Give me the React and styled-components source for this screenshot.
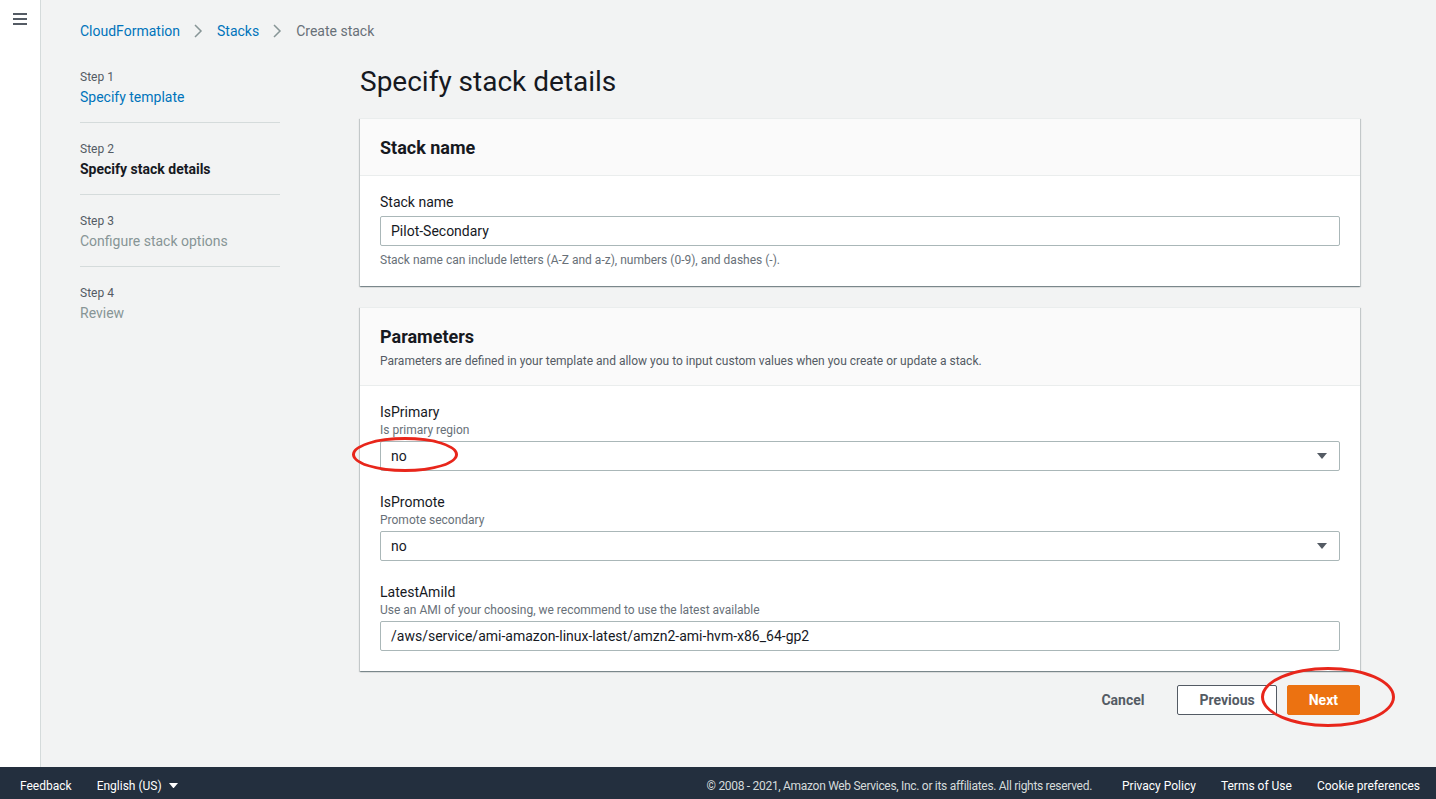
import React from 'react';
import styled, { createGlobalStyle } from 'styled-components';

const GlobalStyle = createGlobalStyle`
  html, body {
    margin: 0;
    padding: 0;
    height: 100%;
  }
  body {
    font-family: Roboto, "Helvetica Neue", Arial, sans-serif;
    color: #16191f;
    background: #f2f3f3;
  }
  * {
    box-sizing: border-box;
  }
`

const Page = styled.div`
  display: flex;
  flex-direction: column;
  height: 799px;
`

const Body = styled.div`
  flex: 1;
  display: flex;
  min-height: 0;
`

const Rail = styled.div`
  width: 41px;
  background: #fff;
  border-right: 1px solid #d5dbdb;
  padding: 10px 0 0 13px;
`

const Main = styled.main`
  flex: 1;
  padding: 21px 76px 0 39px;
`

const Breadcrumbs = styled.nav`
  display: flex;
  align-items: center;
  gap: 14px;
  font-size: 14px;
  line-height: 20px;
`

const Crumb = styled.span`
  color: ${props => (props.$current ? '#687078' : '#0073bb')};
`

const Layout = styled.div`
  display: grid;
  grid-template-columns: 200px 1000px;
  column-gap: 80px;
  margin-top: 23px;
`

const StepNav = styled.ol`
  list-style: none;
  margin: 0;
  padding: 5px 0 0;
`

const StepItem = styled.li`
  padding: 0 0 15px;
  &:not(:first-child) {
    padding-top: 18px;
  }
  &:not(:last-child) {
    border-bottom: 1px solid #d5dbdb;
  }
`

const StepLabel = styled.div`
  font-size: 12px;
  line-height: 16px;
  color: #545b64;
  margin-bottom: 2px;
`

const StepTitle = styled.div`
  font-size: 14px;
  line-height: 20px;
  color: ${props => ({ link: '#0073bb', active: '#16191f', disabled: '#879596' }[props.$state])};
  font-weight: ${props => (props.$state === 'active' ? 700 : 400)};
`

const Content = styled.div`
  display: flex;
  flex-direction: column;
`

const PageTitle = styled.h1`
  margin: 0 0 18px;
  font-size: 28px;
  line-height: 36px;
  font-weight: 400;
  color: #16191f;
`

const Panel = styled.section`
  background: #fff;
  box-shadow: 0 1px 1px 0 rgba(0, 28, 36, 0.3), 1px 1px 1px 0 rgba(0, 28, 36, 0.15), -1px 1px 1px 0 rgba(0, 28, 36, 0.15);
  border-top: 1px solid #eaeded;
  margin-bottom: ${props => props.$gap || 0}px;
`

const PanelHeader = styled.header`
  background: #fafafa;
  border-bottom: 1px solid #eaeded;
  padding: 18px 20px 16px;
`

const PanelTitle = styled.h2`
  margin: 0;
  font-size: 18px;
  line-height: 22px;
  font-weight: 700;
`

const PanelDesc = styled.p`
  margin: 5px 0 0;
  font-size: 12px;
  line-height: 16px;
  color: #545b64;
`

const PanelBody = styled.div`
  padding: ${props => props.$pad};
  display: flex;
  flex-direction: column;
  gap: 21px;
`

const Field = styled.div`
  display: flex;
  flex-direction: column;
`

const Label = styled.label`
  font-size: 14px;
  line-height: 20px;
  color: #16191f;
`

const Description = styled.div`
  font-size: 12px;
  line-height: 16px;
  color: #687078;
`

const Control = styled.div`
  position: relative;
  margin-top: ${props => props.$top}px;
`

const Input = styled.div`
  height: 30px;
  border: 1px solid #aab7b8;
  border-radius: 2px;
  background: #fff;
  padding: 0 12px 0 10px;
  display: flex;
  align-items: center;
  justify-content: space-between;
  font-size: 14px;
  color: #16191f;
`

const Hint = styled.div`
  margin-top: 6px;
  font-size: 12px;
  line-height: 16px;
  color: #687078;
`

const Actions = styled.div`
  display: flex;
  justify-content: flex-end;
  align-items: center;
  gap: 10px;
  margin-top: 14px;
`

const Button = styled.button`
  position: relative;
  height: 30px;
  padding: 0 ${props => (props.$variant === 'link' ? 22 : 21)}px;
  font-family: inherit;
  font-size: 14px;
  font-weight: 700;
  border-radius: 2px;
  cursor: pointer;
  color: ${props => (props.$variant === 'primary' ? '#fff' : '#545b64')};
  background: ${props => (props.$variant === 'primary' ? '#ec7211' : props.$variant === 'normal' ? '#fff' : 'transparent')};
  border: 1px solid ${props => (props.$variant === 'primary' ? '#ec7211' : props.$variant === 'normal' ? '#545b64' : 'transparent')};
`

const Annotation = styled.span`
  position: absolute;
  left: ${props => props.$x}px;
  top: ${props => props.$y}px;
  width: ${props => props.$w}px;
  height: ${props => props.$h}px;
  border: 3px solid #e8261b;
  border-radius: 50%;
  pointer-events: none;
`

const Footer = styled.footer`
  height: 32px;
  background: #232f3e;
  display: flex;
  align-items: center;
  padding: 5px 16px 0 20px;
  font-size: 12px;
`

const FooterLink = styled.span`
  color: #fff;
  margin-right: ${props => props.$mr || 0}px;
  display: inline-flex;
  align-items: center;
  gap: 7px;
`

const Copyright = styled.span`
  margin-left: auto;
  margin-right: 30px;
  color: #d5dbdb;
  letter-spacing: -0.3px;
`

const Hamburger = () => (
  <svg width="14" height="12" viewBox="0 0 14 12">
    <g stroke="#545b64" strokeWidth="2">
      <line x1="0" y1="1" x2="14" y2="1" />
      <line x1="0" y1="6" x2="14" y2="6" />
      <line x1="0" y1="11" x2="14" y2="11" />
    </g>
  </svg>
)

const Chevron = () => (
  <svg width="9" height="14" viewBox="0 0 9 14">
    <polyline points="1,1 7,7 1,13" fill="none" stroke="#879596" strokeWidth="1.5" />
  </svg>
)

const Caret = ({ color = '#545b64', size = 10 }) => (
  <svg width={size} height={size * 0.6} viewBox="0 0 10 6">
    <polygon points="0,0 10,0 5,6" fill={color} />
  </svg>
)

const steps = [
  { label: 'Step 1', title: 'Specify template', state: 'link' },
  { label: 'Step 2', title: 'Specify stack details', state: 'active' },
  { label: 'Step 3', title: 'Configure stack options', state: 'disabled' },
  { label: 'Step 4', title: 'Review', state: 'disabled' },
]

const params = [
  { name: 'IsPrimary', desc: 'Is primary region', value: 'no', select: true, circled: true },
  { name: 'IsPromote', desc: 'Promote secondary', value: 'no', select: true },
  { name: 'LatestAmiId', desc: 'Use an AMI of your choosing, we recommend to use the latest available', value: '/aws/service/ami-amazon-linux-latest/amzn2-ami-hvm-x86_64-gp2' },
]

const App = () => {
  return (
    <Page>
      <GlobalStyle />
      <Body>
        <Rail>
          <Hamburger />
        </Rail>
        <Main>
          <Breadcrumbs>
            <Crumb>CloudFormation</Crumb>
            <Chevron />
            <Crumb>Stacks</Crumb>
            <Chevron />
            <Crumb $current>Create stack</Crumb>
          </Breadcrumbs>
          <Layout>
            <StepNav>
              {steps.map(step => (
                <StepItem key={step.label}>
                  <StepLabel>{step.label}</StepLabel>
                  <StepTitle $state={step.state}>{step.title}</StepTitle>
                </StepItem>
              ))}
            </StepNav>
            <Content>
              <PageTitle>Specify stack details</PageTitle>
              <Panel $gap={21}>
                <PanelHeader>
                  <PanelTitle>Stack name</PanelTitle>
                </PanelHeader>
                <PanelBody $pad="16px 20px 18px">
                  <Field>
                    <Label>Stack name</Label>
                    <Control $top={4}>
                      <Input>Pilot-Secondary</Input>
                    </Control>
                    <Hint>Stack name can include letters (A-Z and a-z), numbers (0-9), and dashes (-).</Hint>
                  </Field>
                </PanelBody>
              </Panel>
              <Panel>
                <PanelHeader>
                  <PanelTitle>Parameters</PanelTitle>
                  <PanelDesc>Parameters are defined in your template and allow you to input custom values when you create or update a stack.</PanelDesc>
                </PanelHeader>
                <PanelBody $pad="16px 20px 20px">
                  {params.map(p => (
                    <Field key={p.name}>
                      <Label>{p.name}</Label>
                      <Description>{p.desc}</Description>
                      <Control $top={3}>
                        <Input>
                          <span>{p.value}</span>
                          {p.select && <Caret />}
                        </Input>
                        {p.circled && <Annotation $x={-28} $y={-4} $w={106} $h={35} />}
                      </Control>
                    </Field>
                  ))}
                </PanelBody>
              </Panel>
              <Actions>
                <Button $variant="link">Cancel</Button>
                <Button $variant="normal">Previous</Button>
                <Button $variant="primary">
                  Next
                  <Annotation $x={-27} $y={-19} $w={134} $h={60} />
                </Button>
              </Actions>
            </Content>
          </Layout>
        </Main>
      </Body>
      <Footer>
        <FooterLink $mr={25}>Feedback</FooterLink>
        <FooterLink>English (US) <Caret color="#fff" size={9} /></FooterLink>
        <Copyright>© 2008 - 2021, Amazon Web Services, Inc. or its affiliates. All rights reserved.</Copyright>
        <FooterLink $mr={25}>Privacy Policy</FooterLink>
        <FooterLink $mr={25}>Terms of Use</FooterLink>
        <FooterLink>Cookie preferences</FooterLink>
      </Footer>
    </Page>
  );
}

export default App;
